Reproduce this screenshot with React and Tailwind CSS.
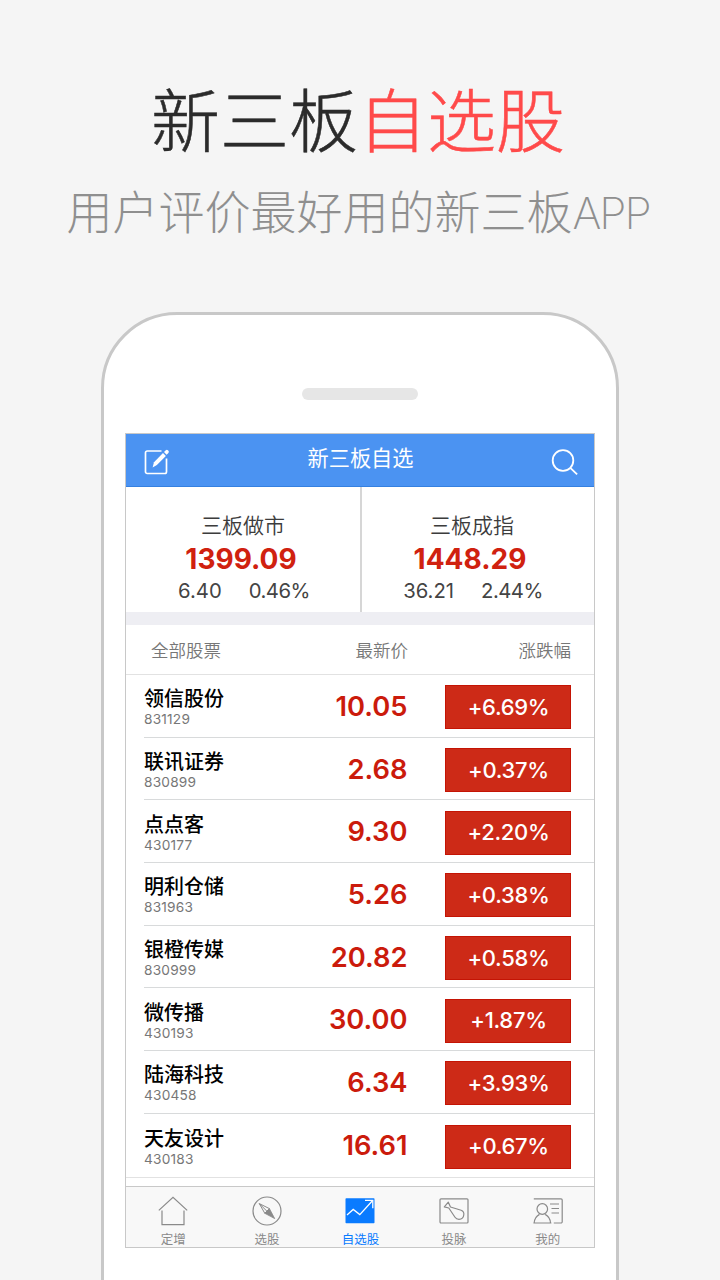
const STOCKS = [
  { name: '领信股份', code: '831129', price: '10.05', change: '+6.69%' },
  { name: '联讯证券', code: '830899', price: '2.68', change: '+0.37%' },
  { name: '点点客', code: '430177', price: '9.30', change: '+2.20%' },
  { name: '明利仓储', code: '831963', price: '5.26', change: '+0.38%' },
  { name: '银橙传媒', code: '830999', price: '20.82', change: '+0.58%' },
  { name: '微传播', code: '430193', price: '30.00', change: '+1.87%' },
  { name: '陆海科技', code: '430458', price: '6.34', change: '+3.93%' },
  { name: '天友设计', code: '430183', price: '16.61', change: '+0.67%' },
];

const INDEXES = [
  { name: '三板做市', value: '1399.09', diff: '6.40', percent: '0.46%' },
  { name: '三板成指', value: '1448.29', diff: '36.21', percent: '2.44%' },
];

const TABS = [
  { label: '定增', Icon: HomeIcon },
  { label: '选股', Icon: CompassIcon },
  { label: '自选股', Icon: ChartIcon, active: true },
  { label: '投脉', Icon: TieIcon },
  { label: '我的', Icon: ProfileIcon },
];

function EditIcon() {
  return (
    <svg className="mt-[3px] h-[28px] w-[26px]" viewBox="0 0 26 28" fill="none" stroke="white">
      <path d="M17.5 3H3.2A1.7 1.7 0 0 0 1.5 4.7v19.1a1.7 1.7 0 0 0 1.7 1.7h17.6a1.7 1.7 0 0 0 1.7-1.7V10.5" strokeWidth="1.7" />
      <path d="M8.6 19.4l1.4-5.2 9-9.1 2.9 2.9-9 9z" fill="white" stroke="none" />
      <path d="M20 4.1l1.8-1.8a1.5 1.5 0 0 1 2.1 0l.5.5a1.5 1.5 0 0 1 0 2.1l-1.8 1.8z" fill="white" stroke="none" />
    </svg>
  );
}

function SearchIcon() {
  return (
    <svg className="mt-[3px] h-[28px] w-[28px]" viewBox="0 0 28 28" fill="none" stroke="white" strokeWidth="1.8">
      <circle cx="12" cy="12.5" r="10.3" />
      <path d="M19.3 19.8l6.8 6.6" />
    </svg>
  );
}

function HomeIcon() {
  return (
    <svg className="h-[30px] w-[30px] shrink-0" viewBox="0 0 30 30" fill="none" stroke="#8a8a8a" strokeWidth="1.2">
      <path d="M.8 14.4L15 1.2l14.2 13.2" />
      <path d="M4 14.5v14.2h22V14.5" />
    </svg>
  );
}

function CompassIcon() {
  return (
    <svg className="h-[30px] w-[30px] shrink-0" viewBox="0 0 30 30" fill="none" stroke="#8a8a8a" strokeWidth="1.2">
      <circle cx="15" cy="15" r="14" />
      <path d="M7.3 7.6l10.1 5-4.6 4.7z" strokeWidth="1" />
      <path d="M17.4 12.6l5.3 10-9.9-5.3z" fill="#8a8a8a" strokeWidth="0.8" />
      <path d="M7.3 7.6l7.8 7.8" strokeWidth="1" />
    </svg>
  );
}

function ChartIcon() {
  return (
    <svg className="h-[30px] w-[30px] shrink-0" viewBox="0 0 30 30" fill="none" stroke="white" strokeWidth="1.3">
      <rect x=".5" y="2.3" width="29" height="25" rx="0.8" fill="#0a7bff" stroke="none" />
      <path d="M2 19l6.2-5.6 6.6 5.2L27.2 5" />
      <path d="M20 4.4h7.8v7.8" />
    </svg>
  );
}

function TieIcon() {
  return (
    <svg className="h-[30px] w-[30px] shrink-0" viewBox="0 0 30 30" fill="none" stroke="#8a8a8a" strokeWidth="1.2">
      <rect x="1" y="2.8" width="28" height="24.2" rx="1" />
      <path d="M5.3 10.8l4-4.6 2.2 4.8 10.6 3.3c2.2.9 3 2.4 2.7 4.4-.3 3-2.3 4.6-4.8 4.6-2 0-3.1-.7-4-2.1L9.8 12z" strokeLinejoin="round" />
    </svg>
  );
}

function ProfileIcon() {
  return (
    <svg className="h-[30px] w-[30px] shrink-0" viewBox="0 0 30 30" fill="none" stroke="#8a8a8a" strokeWidth="1.2">
      <path d="M.8 2.8H28A1.2 1.2 0 0 1 29.2 4v21.8A1.2 1.2 0 0 1 28 27h-7.2" />
      <circle cx="9.3" cy="13" r="5.3" />
      <path d="M1.2 27c.2-4.2 2-6.8 5.3-8.6M12.2 18.4c3.3 1.8 5.1 4.4 5.3 8.6M.4 27h18" />
      <path d="M17 8h9M18.5 12.5H26M18.5 17H26" />
    </svg>
  );
}

function IndexCard({ item, className }) {
  return (
    <div className={`flex flex-col items-center pt-[26px] ${className}`}>
      <div className="h-[26px] pl-[4px] text-[21px] leading-[26px] font-[350] text-[#3c3c3c]">{item.name}</div>
      <div className="mt-[3px] h-[34px] text-[28px] leading-[34px] font-bold text-[#d0210f]">{item.value}</div>
      <div className="flex h-[30px] gap-[27px] pl-[6px] text-[20.3px] leading-[30px] text-[#444]">
        <span>{item.diff}</span>
        <span className="tracking-[-0.5px]">{item.percent}</span>
      </div>
    </div>
  );
}

function StockRow({ stock, last }) {
  return (
    <div className={last ? 'border-b border-[#e2e2e2] pl-[18px]' : 'pl-[18px]'}>
      <div className={`flex h-[62.7px] items-center pt-[3px] pr-[23px] ${last ? '' : 'border-b border-[#d8dadb]'}`}>
        <div className="w-[120px] pt-px">
          <div className="h-[23px] text-[20px] leading-[24px] font-medium text-black">{stock.name}</div>
          <div className="h-[18px] text-[13.7px] leading-[18px] tracking-[0.2px] text-[#777]">{stock.code}</div>
        </div>
        <div className="flex-1 pr-[37.5px] text-right text-[27.3px] font-[560] text-[#cb1b0c]">{stock.price}</div>
        <div className="flex h-[44px] w-[126px] items-center justify-center border border-[#c41404] bg-[#cd2a17] pl-px text-[22px] font-medium tracking-[-0.3px] text-white">
          {stock.change}
        </div>
      </div>
    </div>
  );
}

export default function App() {
  return (
    <div className="flex h-[1280px] w-[720px] flex-col items-center overflow-hidden bg-[#f5f5f5] font-['Inter','Noto_Sans_CJK_SC',sans-serif]">
      <h1 className="mt-[87px] h-[70px] pr-[4px] text-[69px] leading-[70px] font-light whitespace-nowrap text-[#2b2b2b] [-webkit-text-stroke:0.5px]">
        新三板<span className="text-[#ff4a4a]">自选股</span>
      </h1>
      <p className="mt-[31px] flex h-[48px] pr-[4px] text-[46px] leading-[48px] font-light whitespace-nowrap text-[#8f8f8f]">
        用户评价最好用的新三板
        <span className="text-[44px] leading-[50px] font-extralight tracking-[-2px]">APP</span>
      </p>

      <div className="mt-[76px] flex h-[1100px] w-[518px] shrink-0 flex-col items-center rounded-t-[76px] border-[3px] border-[#c8c8c8] bg-white">
        <div className="mt-[73px] h-[12px] w-[116px] shrink-0 rounded-full bg-[#e6e6e6]" />

        <div className="mt-[33px] flex h-[815px] w-[470px] shrink-0 flex-col border border-[#c8c8c8] bg-white">
          {/* Title bar */}
          <div className="flex h-[53px] shrink-0 items-center justify-between border-b border-[#3580e0] bg-[#4b93f2] pr-[15px] pl-[18px]">
            <EditIcon />
            <div className="pb-[2px] text-[21.2px] leading-none text-white">新三板自选</div>
            <SearchIcon />
          </div>

          {/* Market indexes */}
          <div className="flex h-[125px] shrink-0">
            <IndexCard item={INDEXES[0]} className="w-[236px] border-r-2 border-[#d6d6d6] pr-[4px]" />
            <IndexCard item={INDEXES[1]} className="flex-1 pr-[16px]" />
          </div>
          <div className="h-[13px] shrink-0 bg-[#eeeef3]" />

          {/* Stock list */}
          <div className="flex h-[50px] shrink-0 items-center border-b border-[#e2e2e2] pt-[3px] pr-[23px] pl-[25px] text-[17.5px] font-[350] text-[#777]">
            <span className="w-[130px]">全部股票</span>
            <span className="flex-1 pr-[37px] text-right">最新价</span>
            <span className="w-[126px] text-right">涨跌幅</span>
          </div>
          {STOCKS.map((stock, i) => (
            <StockRow key={stock.code} stock={stock} last={i === STOCKS.length - 1} />
          ))}

          {/* Tab bar */}
          <div className="mt-auto flex h-[61px] shrink-0 border-t border-[#c8c8c8] bg-[#f8f8f8]">
            {TABS.map(({ label, Icon, active }) => (
              <div key={label} className="flex flex-1 flex-col items-center pt-[9px] pl-px">
                <Icon />
                <span className={`mt-[7px] text-[12.5px] leading-[14px] ${active ? 'text-[#0a7bff]' : 'text-[#8a8a8a]'}`}>
                  {label}
                </span>
              </div>
            ))}
          </div>
        </div>
      </div>
    </div>
  );
}
